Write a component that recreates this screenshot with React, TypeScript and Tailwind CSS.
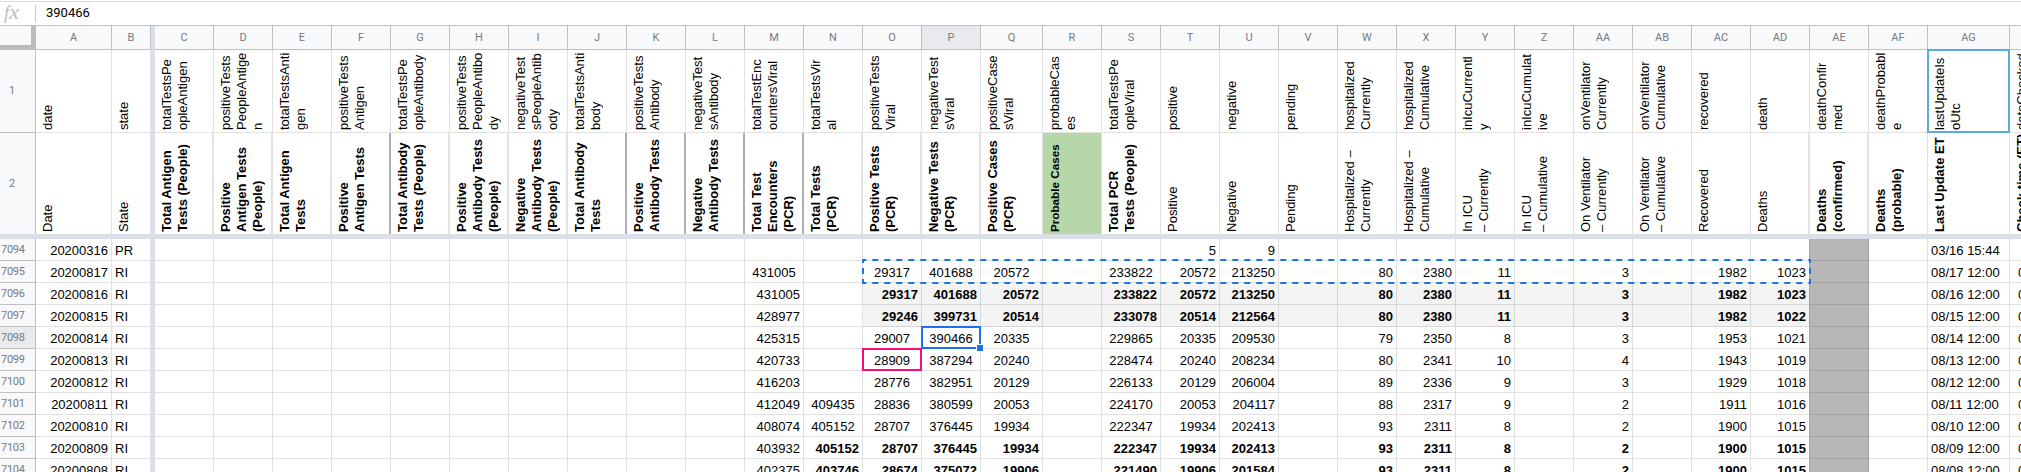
type Cell = { t?: string; b?: boolean; a?: 'l' | 'c' | 'r' | 'i' };

const letters = ['A', 'B', '|', 'C', 'D', 'E', 'F', 'G', 'H', 'I', 'J', 'K', 'L', 'M', 'N', 'O', 'P', 'Q', 'R', 'S', 'T', 'U', 'V', 'W', 'X', 'Y', 'Z', 'AA', 'AB', 'AC', 'AD', 'AE', 'AF', 'AG', 'AH'];

const width = (c: string) => {
  if (c === 'A') return 'w-[76px]';
  if (c === 'B') return 'w-[39px]';
  if (c === '|') return 'w-[4px]';
  if (c === 'Q') return 'w-[62px]';
  if (c === 'AG') return 'w-[82px]';
  return 'w-[59px]';
};

const keys: Record<string, string[]> = {
  A: ['date'], B: ['state'],
  C: ['totalTestsPe', 'opleAntigen'], D: ['positiveTests', 'PeopleAntige', 'n'], E: ['totalTestsAnti', 'gen'],
  F: ['positiveTests', 'Antigen'], G: ['totalTestsPe', 'opleAntibody'], H: ['positiveTests', 'PeopleAntibo', 'dy'],
  I: ['negativeTest', 'sPeopleAntib', 'ody'], J: ['totalTestsAnti', 'body'], K: ['positiveTests', 'Antibody'],
  L: ['negativeTest', 'sAntibody'], M: ['totalTestEnc', 'ountersViral'], N: ['totalTestsVir', 'al'],
  O: ['positiveTests', 'Viral'], P: ['negativeTest', 'sViral'], Q: ['positiveCase', 'sViral'],
  R: ['probableCas', 'es'], S: ['totalTestsPe', 'opleViral'], T: ['positive'], U: ['negative'], V: ['pending'],
  W: ['hospitalized', 'Currently'], X: ['hospitalized', 'Cumulative'], Y: ['inIcuCurrentl', 'y'],
  Z: ['inIcuCumulat', 'ive'], AA: ['onVentilator', 'Currently'], AB: ['onVentilator', 'Cumulative'],
  AC: ['recovered'], AD: ['death'], AE: ['deathConfir', 'med'], AF: ['deathProbabl', 'e'],
  AG: ['lastUpdateIs', 'oUtc'], AH: ['dateChecked'],
};

const titles: Record<string, string[]> = {
  A: ['Date'], B: ['State'],
  C: ['Total Antigen', 'Tests (People)'], D: ['Positive', 'Antigen Tests', '(People)'], E: ['Total Antigen', 'Tests'],
  F: ['Positive', 'Antigen Tests'], G: ['Total Antibody', 'Tests (People)'], H: ['Positive', 'Antibody Tests', '(People)'],
  I: ['Negative', 'Antibody Tests', '(People)'], J: ['Total Antibody', 'Tests'], K: ['Positive', 'Antibody Tests'],
  L: ['Negative', 'Antibody Tests'], M: ['Total Test', 'Encounters', '(PCR)'], N: ['Total Tests', '(PCR)'],
  O: ['Positive Tests', '(PCR)'], P: ['Negative Tests', '(PCR)'], Q: ['Positive Cases', '(PCR)'],
  R: ['Probable Cases'], S: ['Total PCR', 'Tests (People)'], T: ['Positive'], U: ['Negative'], V: ['Pending'],
  W: ['Hospitalized –', 'Currently'], X: ['Hospitalized –', 'Cumulative'], Y: ['In ICU', '– Currently'],
  Z: ['In ICU', '– Cumulative'], AA: ['On Ventilator', '– Currently'], AB: ['On Ventilator', '– Cumulative'],
  AC: ['Recovered'], AD: ['Deaths'], AE: ['Deaths', '(confirmed)'], AF: ['Deaths', '(probable)'],
  AG: ['Last Update ET'], AH: ['Check time (ET)'],
};

const plainTitles = ['A', 'B', 'T', 'U', 'V', 'W', 'X', 'Y', 'Z', 'AA', 'AB', 'AC', 'AD'];
const darkEdge = ['F', 'J', 'K', 'L', 'M'];
const softEdge = ['C', 'D', 'E', 'G', 'H', 'I', 'N', 'O', 'P', 'AD', 'AE'];

const fields = ['M', 'N', 'O', 'P', 'Q', 'S', 'T', 'U', 'W', 'X', 'Y', 'AA', 'AC', 'AD'];

type Row = { n: number; d: string; s: string; u: string; bold?: boolean; shade?: boolean; v: string[] };

const rows: Row[] = [
  { n: 7094, d: '20200316', s: 'PR', u: '03/16 15:44', v: ['', '', '', '', '', '', '5', '9', '', '', '', '', '', ''] },
  { n: 7095, d: '20200817', s: 'RI', u: '08/17 12:00', v: ['431005', '', '29317', '401688', '20572', '233822', '20572', '213250', '80', '2380', '11', '3', '1982', '1023'] },
  { n: 7096, d: '20200816', s: 'RI', u: '08/16 12:00', bold: true, shade: true, v: ['431005', '', '29317', '401688', '20572', '233822', '20572', '213250', '80', '2380', '11', '3', '1982', '1023'] },
  { n: 7097, d: '20200815', s: 'RI', u: '08/15 12:00', bold: true, shade: true, v: ['428977', '', '29246', '399731', '20514', '233078', '20514', '212564', '80', '2380', '11', '3', '1982', '1022'] },
  { n: 7098, d: '20200814', s: 'RI', u: '08/14 12:00', v: ['425315', '', '29007', '390466', '20335', '229865', '20335', '209530', '79', '2350', '8', '3', '1953', '1021'] },
  { n: 7099, d: '20200813', s: 'RI', u: '08/13 12:00', v: ['420733', '', '28909', '387294', '20240', '228474', '20240', '208234', '80', '2341', '10', '4', '1943', '1019'] },
  { n: 7100, d: '20200812', s: 'RI', u: '08/12 12:00', v: ['416203', '', '28776', '382951', '20129', '226133', '20129', '206004', '89', '2336', '9', '3', '1929', '1018'] },
  { n: 7101, d: '20200811', s: 'RI', u: '08/11 12:00', v: ['412049', '409435', '28836', '380599', '20053', '224170', '20053', '204117', '88', '2317', '9', '2', '1911', '1016'] },
  { n: 7102, d: '20200810', s: 'RI', u: '08/10 12:00', v: ['408074', '405152', '28707', '376445', '19934', '222347', '19934', '202413', '93', '2311', '8', '2', '1900', '1015'] },
  { n: 7103, d: '20200809', s: 'RI', u: '08/09 12:00', bold: true, v: ['403932', '405152', '28707', '376445', '19934', '222347', '19934', '202413', '93', '2311', '8', '2', '1900', '1015'] },
  { n: 7104, d: '20200808', s: 'RI', u: '08/08 12:00', bold: true, v: ['402375', '403746', '28674', '375072', '19906', '221490', '19906', '201584', '93', '2311', '8', '2', '1900', '1015'] },
];

function cellOf(row: Row, c: string): Cell {
  if (c === 'A') return { t: row.d, a: 'r' };
  if (c === 'B') return { t: row.s, a: 'l' };
  if (c === 'AG') return { t: row.u, a: 'l' };
  if (c === 'AH') return { t: row.n === 7094 ? '' : row.u.slice(0, 5), a: 'i' };
  const i = fields.indexOf(c);
  if (i < 0) return {};
  const t = row.v[i];
  if (c === 'M') return { t, a: row.n === 7095 ? 'c' : 'r' };
  if (i <= 5) return { t, b: row.bold, a: row.bold ? 'r' : 'c' };
  return { t, b: row.bold, a: 'r' };
}

function Vertical({ lines, cls }: { lines: string[]; cls: string }) {
  return (
    <div className={`h-full rotate-180 whitespace-nowrap [writing-mode:vertical-rl] ${cls}`}>
      {lines.map((l) => (
        <div key={l} className="leading-[16px]">{l}</div>
      ))}
    </div>
  );
}

function HeadRow({ n }: { n: 1 | 2 }) {
  const data = n === 1 ? keys : titles;
  return (
    <div className={`flex shrink-0 ${n === 1 ? 'h-[83px]' : 'h-[101px]'}`}>
      <div className={`flex w-9 shrink-0 items-center border-r border-[#c0c0c0] bg-[#f8f9fa] pl-[9px] font-[Roboto,sans-serif] text-[11px] leading-[16px] text-[#777b80] ${n === 1 ? 'border-b' : ''}`}>{n}</div>
      {letters.map((c) => {
        if (c === '|') return <div key={c} className="w-[4px] shrink-0 bg-[#dadfe8]" />;
        let edge = 'border-r border-[#e1e1e1]';
        if (n === 2 && darkEdge.includes(c)) edge = 'border-r-2 border-r-[#b0b0b0] border-[#e1e1e1]';
        if (n === 2 && softEdge.includes(c)) edge = 'border-r-2 border-[#e1e1e1]';
        if (c === 'B') edge = 'border-r border-r-[#dadfe8] border-[#e1e1e1]';
        const bold = n === 2 && !plainTitles.includes(c);
        return (
          <div key={c} className={`relative shrink-0 ${width(c)} ${edge} ${n === 1 ? 'border-b' : ''} ${n === 2 && c === 'R' ? 'bg-[#b6d7a8]' : ''}`}>
            <div className="flex h-full justify-start pb-[2px] pl-[4px]">
              <Vertical lines={data[c]} cls={`${bold ? 'font-bold' : ''} ${n === 2 && c === 'R' ? 'text-[11.7px]' : ''}`} />
            </div>
            {n === 1 && c === 'AG' && <div className="absolute -inset-px z-10 border-2 border-[#58addb]" />}
          </div>
        );
      })}
    </div>
  );
}

const align = { l: 'justify-start pl-[3px]', c: 'justify-center', r: 'justify-end pr-[3px]', i: 'justify-start pl-[8px]' };

function DataRow({ row }: { row: Row }) {
  const active = row.n === 7098;
  return (
    <div className="flex h-[22px] shrink-0">
      <div className={`w-9 shrink-0 border-r border-b border-[#c0c0c0] pt-[2px] pl-px font-[Roboto,sans-serif] text-[11px] leading-[17px] tracking-[-0.3px] text-[#777b80] ${active ? 'bg-[#e8eaed]' : 'bg-[#f8f9fa]'}`}>{row.n}</div>
      {letters.map((c, i) => {
        if (c === '|') return <div key={c} className="w-[4px] shrink-0 bg-[#dadfe8]" />;
        const cell = cellOf(row, c);
        const inBlock = i >= letters.indexOf('O') && i <= letters.indexOf('AD');
        const shaded = row.shade && inBlock;
        let color = 'border-[#e1e1e1]';
        if (shaded) color = 'border-[#d6d6d6] bg-[#f3f3f3]';
        if (row.n === 7095 && inBlock) color = 'border-r-[#e1e1e1] border-b-[#d6d6d6]';
        if (c === 'AE') color = 'border-[#a2a2a2] bg-[#b7b7b7]';
        if (c === 'AD') color = shaded ? 'border-b-[#d6d6d6] border-r-[#a2a2a2] bg-[#f3f3f3]' : 'border-b-[#e1e1e1] border-r-[#a2a2a2]';
        if (c === 'B') color = 'border-b-[#e1e1e1] border-r-[#dadfe8]';
        return (
          <div key={c} className={`relative flex shrink-0 items-end border-r border-b ${width(c)} ${color} ${align[cell.a ?? 'l']}`}>
            {cell.t && <span className={`leading-[19px] whitespace-nowrap ${cell.b ? 'font-bold' : ''}`}>{cell.t}</span>}
            {active && c === 'P' && (
              <div className="absolute -inset-px z-10 border-2 border-[#1a73e8]">
                <div className="absolute -right-[4px] -bottom-[4px] size-[7px] border-t border-l border-white bg-[#1a73e8]" />
              </div>
            )}
            {row.n === 7099 && c === 'O' && <div className="absolute -inset-px z-10 border-2 border-[#ff0a78]" />}
            {row.n === 7095 && c === 'O' && (
              <svg className="absolute -top-[2px] left-[-1px] z-10 max-w-none" width="949" height="25" fill="none" stroke="#1a73e8" strokeWidth="2">
                <path strokeDasharray="6 6" strokeDashoffset="1.7" d="M0 1H949M0 24H949" />
                <path strokeDasharray="6 5" strokeDashoffset="2" d="M1 0V25M948 0V25" />
              </svg>
            )}
          </div>
        );
      })}
    </div>
  );
}

export default function App() {
  return (
    <div className="flex h-[472px] w-[2021px] flex-col overflow-hidden bg-white pt-px font-['Liberation_Sans',Arial,sans-serif] text-[13px] text-black">
      <div className="flex h-[25px] shrink-0 items-center border-t border-b border-t-[#dcdcdc] border-b-[#c0c0c0]">
        <div className="flex w-[35px] shrink-0 items-baseline pb-[3px] pl-[4px] font-['Liberation_Serif',serif] text-[19px] leading-[20px] text-[#bdbdbd] italic">
          f<span className="text-[22px] leading-[20px]">x</span>
        </div>
        <div className="h-[17px] w-px bg-[#c8c8c8]" />
        <div className="pb-[2px] pl-[10px] font-[Roboto,sans-serif] text-[13px]">390466</div>
      </div>
      <div className="flex h-[24px] shrink-0 font-[Roboto,sans-serif] text-[11px] leading-[17px] text-[#777b80]">
        <div className="w-9 shrink-0 border-r-[5px] border-b-[5px] border-[#bcbcbc] bg-[#f8f9fa]" />
        {letters.map((c) =>
          c === '|' ? (
            <div key={c} className="w-[4px] shrink-0 bg-[#dadfe8]" />
          ) : (
            <div key={c} className={`flex shrink-0 items-center justify-center border-r border-b border-[#c0c0c0] ${width(c)} ${c === 'P' ? 'bg-[#e8eaed]' : 'bg-[#f8f9fa]'}`}>{c === 'AH' ? '' : c}</div>
          ),
        )}
      </div>
      <HeadRow n={1} />
      <HeadRow n={2} />
      <div className="h-[5px] shrink-0 bg-[#dadfe8]" />
      {rows.map((r) => (
        <DataRow key={r.n} row={r} />
      ))}
    </div>
  );
}
